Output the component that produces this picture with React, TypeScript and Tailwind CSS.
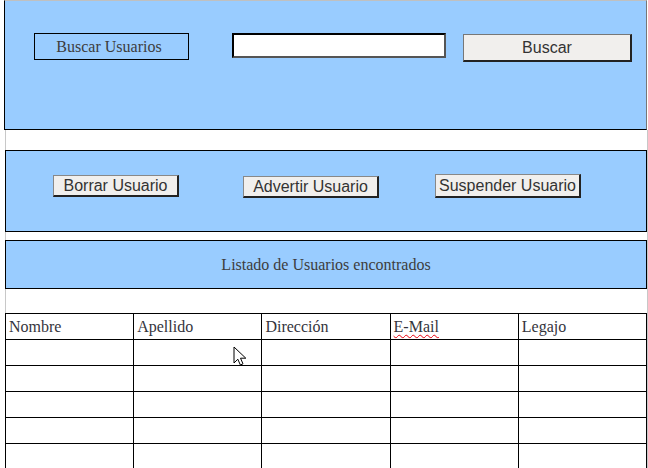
const serif = { fontFamily: '"Liberation Serif", "Times New Roman", serif' };

const rows = [0, 1, 2, 3, 4];
const cols = ["Nombre", "Apellido", "Dirección", "E-Mail", "Legajo"];

const Cursor = () => (
  <svg
    className="absolute left-[233px] top-[346px]"
    width="15"
    height="21"
    viewBox="0 0 15 21"
  >
    <path
      d="M1 1 L1 17 L4.8 13.2 L7.4 19 L10 17.8 L7.5 12.2 L12.8 12.2 Z"
      fill="#fff"
      stroke="#000"
      strokeWidth="1"
      strokeLinejoin="miter"
    />
  </svg>
);

export default function App() {
  return (
    <div className="relative w-[648px] h-[468px] overflow-hidden bg-white font-['Liberation_Sans',Arial,sans-serif]">
      {/* buscar */}
      <div className="ml-[4px] w-[643px] h-[130px] bg-[#99ccff] border-l border-l-black border-t border-t-[#c0c0c0] border-b border-b-black border-r border-r-[#777] flex items-start">
        <div
          className="ml-[29px] mt-[32px] w-[155px] h-[27px] pr-[5px] border border-black flex items-center justify-center text-[16px] text-[#3d3d3d]"
          style={serif}
        >
          Buscar Usuarios
        </div>
        <input
          type="text"
          className="ml-[43px] mt-[32px] w-[214px] h-[25px] bg-white border-t-2 border-l-2 border-t-black border-l-black border-b-2 border-r-2 border-b-[#555] border-r-[#555] outline-none"
        />
        <button className="ml-[17px] mt-[33px] w-[169px] h-[28px] bg-[#f1efed] border-t border-l border-t-[#777] border-l-[#777] border-b-2 border-r-2 border-b-[#222] border-r-[#222] text-[16px] text-[#333] leading-none">
          Buscar
        </button>
      </div>

      <div className="ml-[5px] w-[643px] h-[338px] border-l border-r border-[#c8c8c8]">
        <div className="h-[20px]" />
        {/* acciones */}
        <div className="-ml-px w-[642px] h-[82px] bg-[#99ccff] border border-black flex items-start">
          <button className="ml-[47px] mt-[24px] w-[126px] h-[22px] bg-[#f1efed] border-t border-l border-t-[#888] border-l-[#888] border-b-2 border-r-2 border-b-[#222] border-r-[#222] text-[16px] text-[#333] leading-none">
            Borrar Usuario
          </button>
          <button className="ml-[64px] mt-[25px] w-[136px] h-[22px] bg-[#f1efed] border-t border-l border-t-[#888] border-l-[#888] border-b-2 border-r-2 border-b-[#222] border-r-[#222] text-[16px] text-[#333] leading-none">
            Advertir Usuario
          </button>
          <button className="ml-[56px] mt-[23px] w-[146px] h-[24px] bg-[#f1efed] border-t border-l border-t-[#888] border-l-[#888] border-b-2 border-r-2 border-b-[#222] border-r-[#222] text-[16px] text-[#333] leading-none">
            Suspender Usuario
          </button>
        </div>
        <div className="h-[8px]" />
        {/* titulo listado */}
        <div
          className="-ml-px w-[642px] h-[49px] bg-[#99ccff] border border-black flex items-center justify-center text-[16px] text-[#3d3d3d]"
          style={serif}
        >
          Listado de Usuarios encontrados
        </div>
        <div className="h-[24px]" />
        {/* tabla */}
        <div
          className="-ml-px w-[642px] grid grid-cols-5 border-t border-l border-black text-[16px] text-[#34343c]"
          style={serif}
        >
          {cols.map((c) => (
            <div
              key={c}
              className="h-[26px] border-r border-b border-black pl-[3px] flex items-center"
            >
              {c === "E-Mail" ? (
                <span className="underline decoration-wavy decoration-red-600 decoration-1 underline-offset-2">
                  {c}
                </span>
              ) : (
                c
              )}
            </div>
          ))}
          {rows.map((r) =>
            cols.map((c) => (
              <div
                key={r + c}
                className="h-[26px] border-r border-b border-black"
              />
            ))
          )}
        </div>
      </div>
      <Cursor />
    </div>
  );
}
